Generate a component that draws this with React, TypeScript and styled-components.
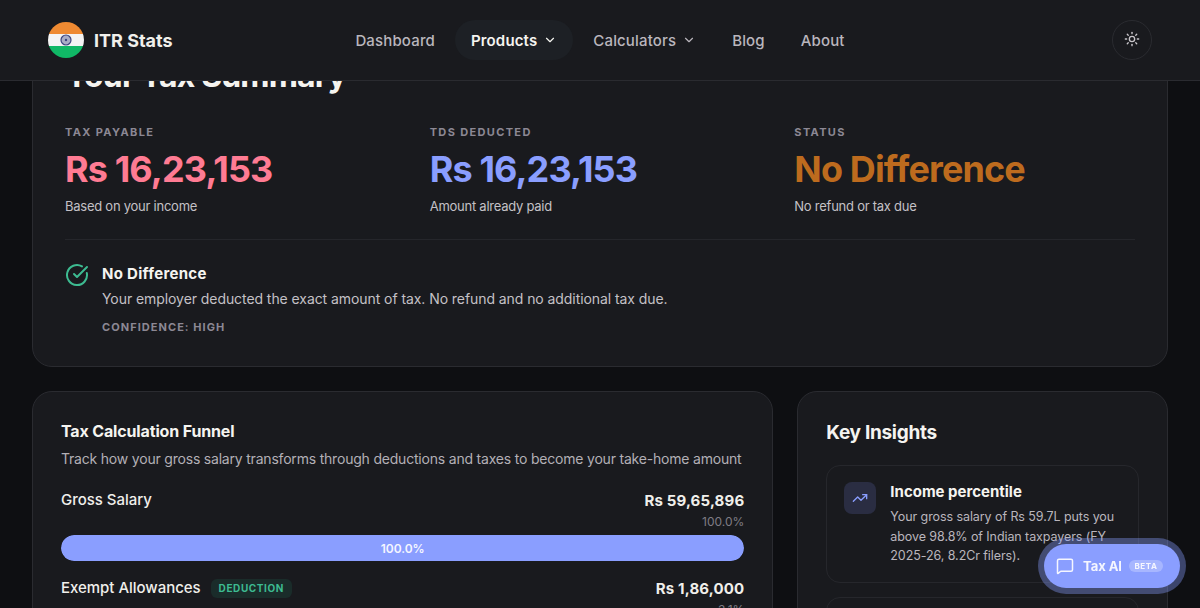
import React from "react";
import styled, { createGlobalStyle } from "styled-components";
import {
  ChevronDown,
  CircleCheckBig,
  MessageSquare,
  Sun,
  TrendingUp,
} from "lucide-react";

const HEAD_FONT = `"Inter", "Liberation Sans", sans-serif`;
const BODY_FONT = `"Inter", "Noto Sans", sans-serif`;

const GlobalStyle = createGlobalStyle`
  html, body {
    margin: 0;
    height: 100%;
    overflow: hidden;
    background: #0e0f12;
    color: #f5f4f0;
    font-family: ${BODY_FONT};
  }
  * { box-sizing: border-box; }
`;

const Header = styled.header`
  position: fixed;
  top: 0;
  left: 0;
  right: 0;
  z-index: 10;
  height: 81px;
  padding: 0 48px;
  display: grid;
  grid-template-columns: 1fr auto 1fr;
  align-items: center;
  background: #191a1e;
  border-bottom: 1px solid #2a2b30;
`;

const Brand = styled.div`
  display: flex;
  align-items: center;
  gap: 10px;
  font-family: ${HEAD_FONT};
  font-size: 18px;
  font-weight: 700;
  color: #f0efeb;
`;

const Nav = styled.nav`
  display: flex;
  align-items: center;
  gap: 4px;
`;

const NavItem = styled.a<{ $active?: boolean }>`
  height: 40px;
  padding: 0 16px;
  border-radius: 20px;
  display: flex;
  align-items: center;
  gap: 6px;
  font-size: 15px;
  font-weight: ${(p) => (p.$active ? 600 : 500)};
  letter-spacing: 0.15px;
  color: ${(p) => (p.$active ? "#f5f4f0" : "#bab6bd")};
  background: ${(p) => (p.$active ? "#1d2025" : "transparent")};
`;

const ThemeButton = styled.button`
  justify-self: end;
  width: 40px;
  height: 40px;
  padding: 0 0 3px;
  border-radius: 50%;
  border: 1px solid #2a2b30;
  background: transparent;
  color: #c9c6cb;
  display: flex;
  align-items: center;
  justify-content: center;
`;

const Main = styled.main`
  margin-top: 23px;
  padding: 0 32px;
  display: flex;
  flex-direction: column;
  gap: 24px;
`;

const Card = styled.section`
  background: #191a1e;
  border: 1px solid #2a2b30;
  border-radius: 20px;
`;

const SummaryCard = styled(Card)`
  padding: 32px 32px 31px;
`;

const SummaryTitle = styled.h1`
  margin: 0 0 28px;
  height: 40px;
  font-family: ${HEAD_FONT};
  font-size: 32px;
  line-height: 40px;
  font-weight: 700;
  letter-spacing: -0.85px;
`;

const StatGrid = styled.div`
  display: grid;
  grid-template-columns: repeat(3, 1fr);
  gap: 24px;
  padding-bottom: 23px;
  border-bottom: 1px solid #25262b;
`;

const Stat = styled.div`
  display: flex;
  flex-direction: column;
`;

const StatLabel = styled.div`
  font-size: 11px;
  line-height: 16px;
  font-weight: 700;
  letter-spacing: 1.35px;
  color: #8c8894;
`;

const StatValue = styled.div<{ $color: string }>`
  margin-top: 7px;
  font-family: ${HEAD_FONT};
  font-size: 36px;
  line-height: 44px;
  font-weight: 700;
  letter-spacing: -0.87px;
  color: ${(p) => p.$color};
`;

const StatNote = styled.div`
  margin-top: 5px;
  font-size: 13px;
  line-height: 20px;
  letter-spacing: -0.25px;
  color: #c4c1c6;
`;

const Verdict = styled.div`
  margin-top: 23px;
  display: flex;
  gap: 13px;
  color: #3dbb91;
`;

const VerdictBody = styled.div`
  display: flex;
  flex-direction: column;
`;

const VerdictTitle = styled.div`
  font-family: ${HEAD_FONT};
  font-size: 15px;
  line-height: 22px;
  font-weight: 700;
  letter-spacing: 0.3px;
  color: #f5f4f0;
`;

const VerdictText = styled.div`
  margin-top: 3px;
  font-size: 14px;
  line-height: 22px;
  letter-spacing: -0.07px;
  color: #c4c1c6;
`;

const Confidence = styled.div`
  margin-top: 9px;
  font-size: 11px;
  line-height: 16px;
  font-weight: 700;
  letter-spacing: 1.05px;
  color: #8c8894;
`;

const Columns = styled.div`
  display: grid;
  grid-template-columns: 2fr 1fr;
  gap: 24px;
`;

const FunnelCard = styled(Card)`
  padding: 27px 28px 28px;
`;

const FunnelTitle = styled.h2`
  margin: 0;
  font-family: ${HEAD_FONT};
  font-size: 16px;
  line-height: 24px;
  font-weight: 700;
  letter-spacing: -0.15px;
`;

const FunnelSub = styled.p`
  margin: 4px 0 0;
  padding-bottom: 2px;
  font-size: 14px;
  line-height: 24px;
  letter-spacing: -0.2px;
  color: #b3b0b6;
`;

const FunnelRow = styled.div`
  margin-top: 15px;
  display: flex;
  justify-content: space-between;
  align-items: flex-start;
`;

const RowName = styled.div`
  display: flex;
  align-items: center;
  gap: 10px;
  font-size: 15px;
  line-height: 24px;
  font-weight: 500;
  letter-spacing: -0.03px;
  color: #f0efeb;
`;

const Tag = styled.span`
  height: 19px;
  padding: 0 8px;
  border-radius: 6px;
  background: #1a2c2a;
  color: #3dbb91;
  font-size: 10px;
  line-height: 19px;
  font-weight: 700;
  letter-spacing: 0.6px;
`;

const RowFigures = styled.div`
  text-align: right;
`;

const RowAmount = styled.div`
  font-size: 15px;
  line-height: 26px;
  font-weight: 700;
  letter-spacing: 0.15px;
  color: #f0efeb;
`;

const RowShare = styled.div`
  font-size: 12px;
  line-height: 16px;
  color: #7f7c85;
`;

const Bar = styled.div`
  margin-top: 5px;
  height: 26px;
  border-radius: 13px;
  background: #1f2127;
  overflow: hidden;
`;

const BarFill = styled.div`
  height: 100%;
  border-radius: 13px;
  background: #8a9eff;
  display: flex;
  align-items: center;
  justify-content: center;
  font-size: 12px;
  font-weight: 600;
  color: #f5f6ff;
`;

const InsightsCard = styled(Card)`
  padding: 26px 28px;
`;

const InsightsTitle = styled.h2`
  margin: 0 0 17px;
  font-family: ${HEAD_FONT};
  font-size: 19px;
  line-height: 30px;
  font-weight: 700;
  letter-spacing: -0.3px;
`;

const InsightList = styled.div`
  display: flex;
  flex-direction: column;
  gap: 14px;
`;

const Insight = styled.div`
  min-height: 116px;
  padding: 16px 17px;
  border: 1px solid #26272c;
  border-radius: 14px;
  display: flex;
  gap: 14px;
`;

const InsightIcon = styled.div`
  flex: none;
  width: 32px;
  height: 32px;
  border-radius: 8px;
  background: #2a2d42;
  color: #8a9eff;
  display: flex;
  align-items: center;
  justify-content: center;
`;

const InsightTitle = styled.div`
  font-size: 15px;
  line-height: 20px;
  font-weight: 700;
  color: #f5f4f0;
`;

const InsightText = styled.div`
  margin-top: 5px;
  font-size: 12.5px;
  line-height: 19.5px;
  letter-spacing: -0.08px;
  color: #bab6bd;
`;

const ChatButton = styled.button`
  position: fixed;
  right: 20px;
  bottom: 20px;
  z-index: 20;
  height: 44px;
  width: 136px;
  padding: 0 0 0 12px;
  border: 0;
  border-radius: 22px;
  background: #8a9eff;
  box-shadow: 0 0 0 6px rgba(138, 158, 255, 0.38);
  color: #f5f6ff;
  display: flex;
  align-items: center;
  font-family: ${HEAD_FONT};
  font-size: 13px;
  font-weight: 700;
`;

const ChatLabel = styled.span`
  margin-left: 9px;
  letter-spacing: -0.05px;
`;

const Beta = styled.span`
  margin-left: 7px;
  height: 12px;
  padding: 0 5.5px;
  border-radius: 6px;
  background: rgba(255, 255, 255, 0.25);
  font-size: 8px;
  line-height: 12px;
  font-weight: 700;
  letter-spacing: 0.6px;
`;

function Flag() {
  return (
    <svg width="36" height="36" viewBox="0 0 36 36">
      <defs>
        <clipPath id="flag-clip">
          <circle cx="18" cy="18" r="18" />
        </clipPath>
      </defs>
      <g clipPath="url(#flag-clip)">
        <rect width="36" height="12" fill="#ef8a32" />
        <rect y="12" width="36" height="12" fill="#f4f4f4" />
        <rect y="24" width="36" height="12" fill="#10b866" />
      </g>
      <circle cx="18" cy="18" r="5" fill="#a9adc6" stroke="#3e4580" strokeWidth="1.2" />
      <circle cx="18" cy="18" r="1.2" fill="#3e4580" />
    </svg>
  );
}

const stats = [
  { label: "TAX PAYABLE", value: "Rs 16,23,153", note: "Based on your income", color: "#ff7b93" },
  { label: "TDS DEDUCTED", value: "Rs 16,23,153", note: "Amount already paid", color: "#8a9eff" },
  { label: "STATUS", value: "No Difference", note: "No refund or tax due", color: "#bd6b1e" },
];

export default function App() {
  return (
    <>
      <GlobalStyle />
      <Header>
        <Brand>
          <Flag />
          ITR Stats
        </Brand>
        <Nav>
          <NavItem>Dashboard</NavItem>
          <NavItem $active>
            Products <ChevronDown size={14} />
          </NavItem>
          <NavItem>
            Calculators <ChevronDown size={14} />
          </NavItem>
          <NavItem>Blog</NavItem>
          <NavItem>About</NavItem>
        </Nav>
        <ThemeButton>
          <Sun size={16} />
        </ThemeButton>
      </Header>

      <Main>
        <SummaryCard>
          <SummaryTitle>Your Tax Summary</SummaryTitle>
          <StatGrid>
            {stats.map((s) => (
              <Stat key={s.label}>
                <StatLabel>{s.label}</StatLabel>
                <StatValue $color={s.color}>{s.value}</StatValue>
                <StatNote>{s.note}</StatNote>
              </Stat>
            ))}
          </StatGrid>
          <Verdict>
            <CircleCheckBig size={24} />
            <VerdictBody>
              <VerdictTitle>No Difference</VerdictTitle>
              <VerdictText>
                Your employer deducted the exact amount of tax. No refund and no
                additional tax due.
              </VerdictText>
              <Confidence>CONFIDENCE: HIGH</Confidence>
            </VerdictBody>
          </Verdict>
        </SummaryCard>

        <Columns>
          <FunnelCard>
            <FunnelTitle>Tax Calculation Funnel</FunnelTitle>
            <FunnelSub>
              Track how your gross salary transforms through deductions and taxes
              to become your take-home amount
            </FunnelSub>
            <FunnelRow>
              <RowName>Gross Salary</RowName>
              <RowFigures>
                <RowAmount>Rs 59,65,896</RowAmount>
                <RowShare>100.0%</RowShare>
              </RowFigures>
            </FunnelRow>
            <Bar>
              <BarFill style={{ width: "100%" }}>100.0%</BarFill>
            </Bar>
            <FunnelRow>
              <RowName>
                Exempt Allowances <Tag>DEDUCTION</Tag>
              </RowName>
              <RowFigures>
                <RowAmount>Rs 1,86,000</RowAmount>
                <RowShare>3.1%</RowShare>
              </RowFigures>
            </FunnelRow>
          </FunnelCard>

          <InsightsCard>
            <InsightsTitle>Key Insights</InsightsTitle>
            <InsightList>
              <Insight>
                <InsightIcon>
                  <TrendingUp size={16} />
                </InsightIcon>
                <div>
                  <InsightTitle>Income percentile</InsightTitle>
                  <InsightText>
                    Your gross salary of Rs 59.7L puts you above 98.8% of Indian
                    taxpayers (FY 2025-26, 8.2Cr filers).
                  </InsightText>
                </div>
              </Insight>
              <Insight />
            </InsightList>
          </InsightsCard>
        </Columns>
      </Main>

      <ChatButton>
        <MessageSquare size={18} />
        <ChatLabel>Tax AI</ChatLabel>
        <Beta>BETA</Beta>
      </ChatButton>
    </>
  );
}
